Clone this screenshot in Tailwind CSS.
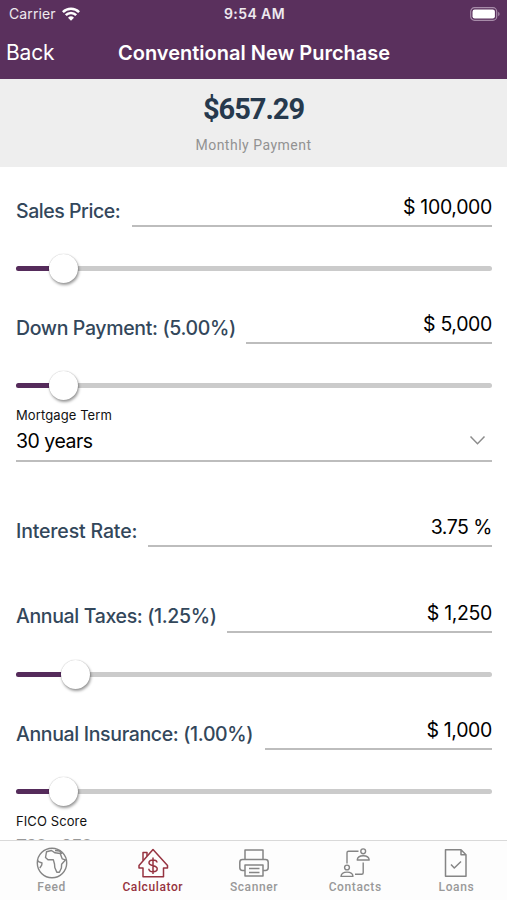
<!DOCTYPE html>
<html lang="en">
<head>
<meta charset="utf-8">
<title>Conventional New Purchase</title>
<script src="https://cdn.jsdelivr.net/npm/@tailwindcss/browser@4"></script>
</head>
<body class="bg-white">
<div class="flex h-[900px] w-[507px] flex-col overflow-hidden bg-white font-['Inter',sans-serif] text-black">
  <header class="h-[79px] shrink-0 bg-[#5a305d] text-white">
    <div class="grid h-[27px] grid-cols-3 items-center pl-[9px] pr-[7px] text-[14px] leading-none">
      <div class="flex items-center gap-[6px]"><span class="tracking-[0.1px] text-white/90">Carrier</span>
        <svg class="h-[14px] w-[18px]" viewBox="0 0 18 14" fill="none" stroke="#fff" stroke-width="2.6"><path d="M.9 5.1a11.6 11.6 0 0 1 16.2 0M3.8 8.2a7.4 7.4 0 0 1 10.4 0"/><path d="M9 13.8 6 10.8a4.3 4.3 0 0 1 6 0z" fill="#fff" stroke="none"/></svg>
      </div>
      <div class="text-center font-semibold tracking-[0.4px] text-white/90">9:54 AM</div>
      <div class="flex justify-end"><svg class="h-[14px] w-[30px]" viewBox="0 0 30 14"><rect x=".7" y=".7" width="26" height="12.6" rx="3.8" fill="none" stroke="#a78ca9" stroke-width="1.2"/><rect x="2.5" y="2.5" width="22.4" height="9" rx="2.2" fill="#fff"/><path d="M28.2 4.8q1.4.7 1.4 2.2t-1.4 2.2z" fill="#a78ca9"/></svg></div>
    </div>
    <div class="flex h-[51px] items-center pl-[6px]">
      <div class="w-[112px] pt-px text-[21px] tracking-[-0.2px]">Back</div>
      <h1 class="whitespace-nowrap text-[20px] font-semibold">Conventional New Purchase</h1>
    </div>
  </header>
  <section class="flex h-[88px] shrink-0 flex-col items-center bg-[#eeeeee] font-['Roboto',sans-serif]">
    <div class="mt-[12px] text-[29px] font-bold leading-[36px] tracking-[-1px] text-[#26394d]">$657.29</div>
    <div class="mt-[9px] text-[14px] leading-[18px] tracking-[0.5px] text-[#929292]">Monthly Payment</div>
  </section>
  <main class="min-h-0 flex-1 overflow-hidden pl-4 pr-[15px] pt-[20px] text-[19.5px] tracking-[-0.35px]">
    <div class="flex h-[40px]"><label class="w-[116px] pt-[12px] font-medium whitespace-nowrap leading-6 text-[#33475b] tracking-[-0.45px]">Sales Price:</label><div class="flex-1 border-b-2 border-[#bdbdbd] pt-[8px] text-right leading-6">$ 100,000</div></div>
    <div class="relative mt-[26px] flex h-[31px] items-center"><div class="h-[5px] w-full rounded-full bg-[#cbcbcb]"></div><div class="absolute left-0 h-[5px] w-[48px] rounded-l-full bg-[#552b5b]"></div><div class="absolute left-[33px] size-[29px] rounded-full bg-white shadow-[1px_2px_3px_rgba(0,0,0,.4),0_0_1px_rgba(0,0,0,.3)]"></div></div>
    <div class="mt-[20px] flex h-[40px]"><label class="w-[230px] pt-[12px] font-medium whitespace-nowrap leading-6 text-[#33475b]">Down Payment: (5.00%)</label><div class="flex-1 border-b-2 border-[#bdbdbd] pt-[8px] text-right leading-6">$ 5,000</div></div>
    <div class="relative mt-[26px] flex h-[31px] items-center"><div class="h-[5px] w-full rounded-full bg-[#cbcbcb]"></div><div class="absolute left-0 h-[5px] w-[48px] rounded-l-full bg-[#552b5b]"></div><div class="absolute left-[33px] size-[29px] rounded-full bg-white shadow-[1px_2px_3px_rgba(0,0,0,.4),0_0_1px_rgba(0,0,0,.3)]"></div></div>
    <div class="mt-[6px] h-[17px] text-[13px] leading-[17px] tracking-[0.1px] text-[#111]">Mortgage Term</div>
    <div class="flex h-[38px] items-start justify-between border-b-2 border-[#bdbdbd] pt-[5px] pr-[6px] leading-6"><span class="tracking-[-0.5px]">30 years</span><svg class="mt-[6px] h-[11px] w-[17px]" viewBox="0 0 17 11" fill="none" stroke="#8c8c8c" stroke-width="1.5"><path d="m1.5 1.5 7 7.2 7-7.2"/></svg></div>
    <div class="mt-[45px] flex h-[40px]"><label class="w-[132px] pt-[12px] font-medium whitespace-nowrap leading-6 text-[#33475b] tracking-[-0.15px]">Interest Rate:</label><div class="flex-1 border-b-2 border-[#bdbdbd] pt-[8px] text-right leading-6 tracking-[-0.5px]">3.75 %</div></div>
    <div class="mt-[46px] flex h-[40px]"><label class="w-[211px] pt-[11px] font-medium whitespace-nowrap leading-6 text-[#33475b]">Annual Taxes: (1.25%)</label><div class="flex-1 border-b-2 border-[#bdbdbd] pt-[8px] text-right leading-6">$ 1,250</div></div>
    <div class="relative mt-[26px] flex h-[31px] items-center"><div class="h-[5px] w-full rounded-full bg-[#cbcbcb]"></div><div class="absolute left-0 h-[5px] w-[60px] rounded-l-full bg-[#552b5b]"></div><div class="absolute left-[45px] size-[29px] rounded-full bg-white shadow-[1px_2px_3px_rgba(0,0,0,.4),0_0_1px_rgba(0,0,0,.3)]"></div></div>
    <div class="mt-[20px] flex h-[40px]"><label class="w-[249px] pt-[12px] font-medium whitespace-nowrap leading-6 text-[#33475b]">Annual Insurance: (1.00%)</label><div class="flex-1 border-b-2 border-[#bdbdbd] pt-[8px] text-right leading-6">$ 1,000</div></div>
    <div class="relative mt-[26px] flex h-[31px] items-center"><div class="h-[5px] w-full rounded-full bg-[#cbcbcb]"></div><div class="absolute left-0 h-[5px] w-[48px] rounded-l-full bg-[#552b5b]"></div><div class="absolute left-[33px] size-[29px] rounded-full bg-white shadow-[1px_2px_3px_rgba(0,0,0,.4),0_0_1px_rgba(0,0,0,.3)]"></div></div>
    <div class="mt-[6px] h-[17px] text-[13px] leading-[17px] tracking-[0.1px] text-[#111]">FICO Score</div>
    <div class="pt-[5px] leading-6 tracking-[-1.8px] text-[#999]">760+ 850</div>
  </main>
  <nav class="grid h-[60px] shrink-0 grid-cols-5 border-t border-[#d9d9d9] bg-[#fdfdfd] pl-px font-['Roboto',sans-serif] text-[12px] font-medium leading-[14px] tracking-[0.6px] text-[#999]">
    <div class="flex flex-col items-center gap-[1px] pt-[6px]"><svg class="size-8" viewBox="0 0 32 32" fill="none" stroke="#858585" stroke-width="1.4" stroke-linejoin="round"><circle cx="16" cy="16" r="14.7"/><path d="M10.500 4.800 9.500 10.500l2.500 2.300 5.300-.2 1.200 4.400.3 3.500 2 4.800h2.600l2-4.300.2-3.700 4-4.500-3.400-1-2-5.300-5.200-.7L15.500 3.500zM19 3.500l4.500.5 2.500 2.800M2 13.500l.5 1.200 3.500 1.300-.3 2.200L3.800 21"/></svg>Feed</div>
    <div class="flex flex-col items-center gap-[1px] pt-[6px] text-[#963340]"><svg class="size-8" viewBox="0 0 32 32" fill="none" stroke="currentColor" stroke-width="1.5" stroke-linejoin="round"><path d="M16 2.500 2 18.500v2.400h4V29.800h20.500v-8.900H30.500v-2.400z"/><path d="M6 13.500V5.500h4v3.500"/><path d="M20 15.500c-.2-1.800-1.700-2.600-4-2.600-2.400 0-4 1-4 2.900 0 4.200 8.200 1.800 8.200 6 0 2-1.600 3-4.200 3-2.500 0-4.100-1-4.200-3M16 10.500v16.500"/></svg>Calculator</div>
    <div class="flex flex-col items-center gap-[1px] pt-[6px]"><svg class="size-8" viewBox="0 0 32 32" fill="none" stroke="#858585" stroke-width="1.5" stroke-linejoin="round"><path d="M7 12.500V3h18v9.500M7 23.500H4.500Q1.800 23.500 1.800 20.800v-5.600Q1.800 12.500 4.500 12.500h23q2.700 0 2.700 2.700v5.600q0 2.700-2.700 2.700H25M7 18h18v11H7zM11 21.500h10.500M11 25.500h10.500"/></svg>Scanner</div>
    <div class="flex flex-col items-center gap-[1px] pt-[6px]"><svg class="size-8" viewBox="0 0 32 32" fill="none" stroke="#858585" stroke-width="1.4" stroke-linejoin="round"><path d="M19.500 4.200H9.500Q8 4.200 8 5.700V16.500M16 27.200h6.700q1.500 0 1.500-1.500V15.500"/><circle cx="24.200" cy="4.300" r="2.400"/><path d="M18.200 13c.3-3 2.200-4.300 6-4.300s5.800 1.300 6 4.300z"/><circle cx="8" cy="20.500" r="2.400"/><path d="M2 29.400c.3-3 2.200-4.300 6-4.300s5.800 1.300 6 4.300z"/></svg>Contacts</div>
    <div class="flex flex-col items-center gap-[1px] pt-[6px]"><svg class="size-8" viewBox="0 0 32 32" fill="none" stroke="#858585" stroke-width="1.5" stroke-linejoin="round"><path d="M5.500 2.700h15.500l5 5v21.600H5.500zM21 2.700v5h5M11 17.500l3.300 3.500 6.700-6.500"/></svg>Loans</div>
  </nav>
</div>
</body>
</html>
